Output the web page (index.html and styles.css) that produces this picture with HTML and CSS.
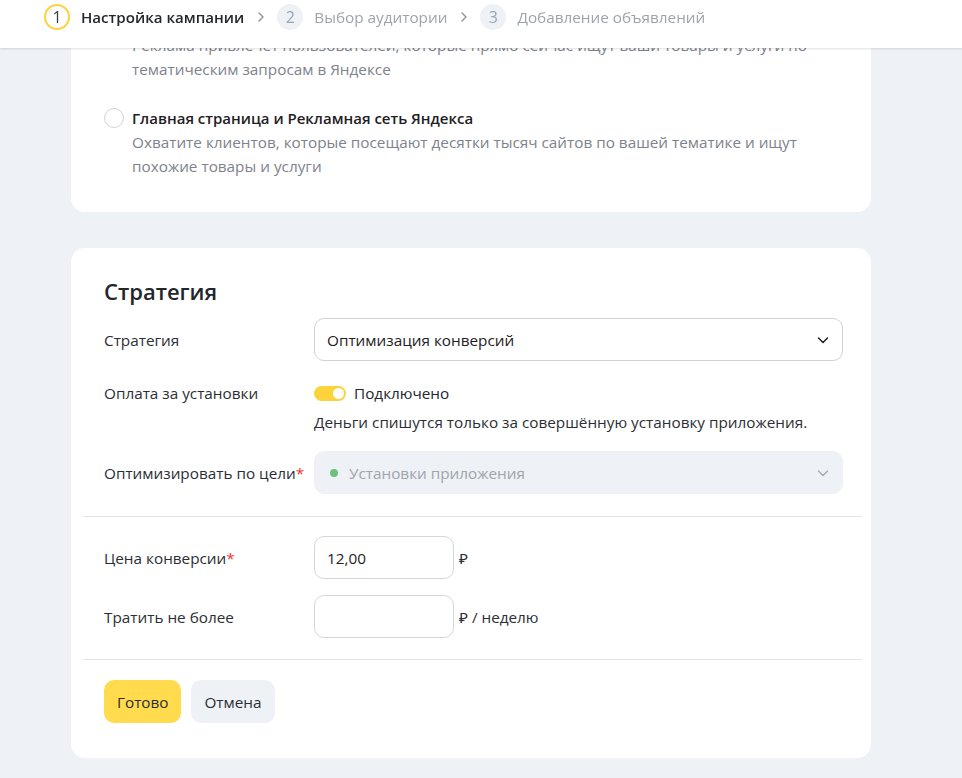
FILE: index.html
```html
<!DOCTYPE html>
<html lang="ru">
<head>
<meta charset="utf-8">
<title>Настройка кампании</title>
<link rel="stylesheet" href="styles.css">
</head>
<body>
<header class="topbar">
  <div class="step step-active">
    <span class="step-num">1</span>
    <span class="step-title">Настройка кампании</span>
  </div>
  <svg class="step-chev" width="8" height="12" viewBox="0 0 8 12"><path d="M2 2l4 4-4 4" fill="none" stroke="#8f949c" stroke-width="1.4" stroke-linecap="round" stroke-linejoin="round"/></svg>
  <div class="step">
    <span class="step-num">2</span>
    <span class="step-title">Выбор аудитории</span>
  </div>
  <svg class="step-chev" width="8" height="12" viewBox="0 0 8 12"><path d="M2 2l4 4-4 4" fill="none" stroke="#8f949c" stroke-width="1.4" stroke-linecap="round" stroke-linejoin="round"/></svg>
  <div class="step">
    <span class="step-num">3</span>
    <span class="step-title">Добавление объявлений</span>
  </div>
</header>

<main class="page">
  <section class="card card-places">
    <div class="option">
      <span class="radio"></span>
      <div class="option-body">
        <div class="option-title">Поиск Яндекса</div>
        <div class="option-desc">Реклама привлечёт пользователей, которые прямо сейчас ищут ваши товары и услуги по<br>тематическим запросам в Яндексе</div>
      </div>
    </div>
    <div class="option">
      <span class="radio"></span>
      <div class="option-body">
        <div class="option-title">Главная страница и Рекламная сеть Яндекса</div>
        <div class="option-desc">Охватите клиентов, которые посещают десятки тысяч сайтов по вашей тематике и ищут<br>похожие товары и услуги</div>
      </div>
    </div>
  </section>

  <section class="card card-strategy">
    <div class="block block-top">
      <h2 class="card-title">Стратегия</h2>
      <div class="row">
        <div class="label">Стратегия</div>
        <div class="control">
          <div class="select">
            <span>Оптимизация конверсий</span>
            <svg class="chev" width="14" height="14" viewBox="0 0 14 14"><path d="M2.5 5l4.5 4.5L11.5 5" fill="none" stroke="#1f2023" stroke-width="1.5" stroke-linecap="round" stroke-linejoin="round"/></svg>
          </div>
        </div>
      </div>
      <div class="row row-toggle">
        <div class="label label-toggle">Оплата за установки</div>
        <div class="control">
          <div class="toggle-line">
            <span class="toggle"><span class="knob"></span></span>
            <span>Подключено</span>
          </div>
          <div class="hint">Деньги спишутся только за совершённую установку приложения.</div>
        </div>
      </div>
      <div class="row">
        <div class="label">Оптимизировать по цели<span class="req">*</span></div>
        <div class="control">
          <div class="select select-disabled">
            <span class="dot"></span>
            <span class="select-text">Установки приложения</span>
            <svg class="chev" width="14" height="14" viewBox="0 0 14 14"><path d="M2.5 5l4.5 4.5L11.5 5" fill="none" stroke="#a3a8b0" stroke-width="1.3" stroke-linecap="round" stroke-linejoin="round"/></svg>
          </div>
        </div>
      </div>
    </div>
    <div class="divider"></div>
    <div class="block block-mid">
      <div class="row">
        <div class="label">Цена конверсии<span class="req">*</span></div>
        <div class="control control-inline">
          <div class="input">12,00</div>
          <span class="unit">₽</span>
        </div>
      </div>
      <div class="row">
        <div class="label">Тратить не более</div>
        <div class="control control-inline">
          <div class="input"></div>
          <span class="unit">₽ / неделю</span>
        </div>
      </div>
    </div>
    <div class="divider"></div>
    <div class="block block-actions">
      <button class="btn btn-primary">Готово</button>
      <button class="btn btn-secondary">Отмена</button>
    </div>
  </section>
</main>
</body>
</html>
```

FILE: styles.css
```css
* { box-sizing: border-box; }

html, body {
  margin: 0;
  padding: 0;
}

body {
  background: #eef1f5;
  font-family: "Open Sans", "Noto Sans", sans-serif;
  font-size: 15.3px;
  line-height: 24px;
  color: #23262b;
  height: 778px;
  overflow: hidden;
}

.topbar {
  position: fixed;
  top: 0;
  left: 0;
  right: 0;
  height: 48px;
  background: #fff;
  display: flex;
  align-items: center;
  padding: 0 0 14px 44px;
  box-shadow: 0 1px 2px rgba(0, 0, 0, 0.12);
  z-index: 10;
}

.step {
  display: flex;
  align-items: center;
  gap: 11px;
}

.step-num {
  width: 26px;
  height: 26px;
  border-radius: 50%;
  background: #eef1f6;
  color: #9ea3ac;
  display: flex;
  align-items: center;
  justify-content: center;
  font-size: 16px;
}

.step-title {
  color: #9ea3ac;
  font-size: 15.3px;
}

.step-active .step-num {
  background: #fff;
  border: 2px solid #fcd33a;
  color: #3a3d42;
}

.step-active .step-title {
  color: #23262b;
  font-weight: 600;
  font-size: 15.1px;
}

.step-chev {
  margin: 0 12px 0 13px;
}

.page {
  margin-top: -23px;
  padding-left: 71px;
  width: 871px;
}

.card {
  background: #fff;
  border-radius: 14px;
  width: 800px;
}

.card-places {
  padding: 32px 32px 34px 33px;
  display: flex;
  flex-direction: column;
  gap: 25px;
}

.option {
  display: flex;
  gap: 8px;
}

.radio {
  width: 20px;
  height: 20px;
  border: 1px solid #d0d3d8;
  border-radius: 50%;
  flex: none;
  margin-top: 2px;
}

.option-title {
  font-weight: 600;
  font-size: 15px;
  color: #1f2023;
}

.option-desc {
  color: #7d828b;
}

.card-strategy {
  margin-top: 36px;
}

.block {
  padding: 20px 28px 21px 33px;
  display: flex;
  flex-direction: column;
  gap: 16px;
}

.block-top {
  padding-top: 30px;
  padding-bottom: 22px;
}

.block-mid {
  padding-top: 19px;
  padding-bottom: 21px;
}

.card-title {
  margin: 0 0 -2px;
  font-size: 22px;
  line-height: 26px;
  font-weight: 600;
  color: #23262b;
}

.row {
  display: flex;
  align-items: center;
}

.row-toggle {
  align-items: flex-start;
}

.label {
  width: 210px;
  flex: none;
  color: #2b2e33;
}

.label-toggle {
  line-height: 32px;
}

.req {
  color: #f0322d;
}

.control {
  flex: 1;
}

.control-inline {
  display: flex;
  align-items: center;
  gap: 5px;
}

.select {
  height: 43px;
  border: 1px solid #cfd2d6;
  border-radius: 10px;
  display: flex;
  align-items: center;
  padding: 0 12px 0 12px;
  color: #1f2023;
}

.select .chev {
  margin-left: auto;
}

.select-disabled {
  background: #eef1f5;
  border-color: #eef1f5;
  padding-left: 15px;
}

.dot {
  width: 8px;
  height: 8px;
  border-radius: 50%;
  background: #6fc07d;
  margin-right: 11px;
}

.select-text {
  color: #9fa4ac;
}

.toggle-line {
  display: flex;
  align-items: center;
  gap: 8px;
  height: 32px;
}

.toggle {
  width: 32px;
  height: 15px;
  border-radius: 8px;
  background: #fcd33a;
  position: relative;
  display: block;
}

.knob {
  position: absolute;
  right: 2px;
  top: 2px;
  width: 11px;
  height: 11px;
  border-radius: 50%;
  background: #fff;
}

.hint {
  line-height: 26px;
  color: #2b2e33;
}

.input {
  width: 140px;
  height: 43px;
  border: 1px solid #d3d6db;
  border-radius: 10px;
  padding: 0 12px;
  display: flex;
  align-items: center;
  color: #1f2023;
}

.unit {
  color: #2b2e33;
}

.divider {
  height: 1px;
  background: #e3e5e9;
  margin: 0 9px 0 12px;
}

.block-actions {
  flex-direction: row;
  gap: 10px;
  padding-top: 20px;
  padding-bottom: 35px;
}

.btn {
  height: 43px;
  border: none;
  border-radius: 10px;
  font-family: inherit;
  font-size: 15.3px;
  color: #2b2e33;
  padding: 0 13px;
  cursor: pointer;
}

.btn-primary {
  background: #ffdb4d;
  width: 77px;
}

.btn-secondary {
  background: #eef1f6;
  width: 84px;
}
```
